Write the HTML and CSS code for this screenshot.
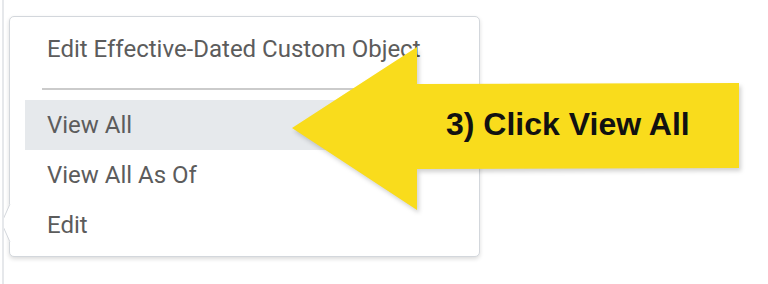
FILE: index.html
```html
<!DOCTYPE html>
<html lang="en">
<head>
    <meta charset="UTF-8">
    <meta name="viewport" content="width=device-width, initial-scale=1.0">
    <title>View All</title>
    <link rel="stylesheet" href="styles.css">
</head>
<body>
    <div class="stage">
        <div class="menu">
            <svg class="notch" width="12" height="38" viewBox="0 0 12 38">
                <rect x="9" y="0" width="3" height="38" fill="#fff"/>
                <path d="M10 0 L1.5 19 L10 38" fill="#fff" stroke="#d3d7dc" stroke-width="1"/>
            </svg>
            <ul>
                <li class="item">Edit Effective-Dated Custom Object</li>
                <li class="divider"></li>
                <li class="item active">View All</li>
                <li class="item">View All As Of</li>
                <li class="item">Edit</li>
            </ul>
        </div>

        <!-- annotation arrow -->
        <svg class="arrow" width="768" height="284" viewBox="0 0 768 284">
            <polygon points="292,128 417,47 417,84 739,83 739,168 417,169 417,210" fill="#f9dc1c"/>
        </svg>
        <span class="callout">3) Click View All</span>
    </div>
</body>
</html>
```

FILE: styles.css
```css
body {
    margin: 0;
    background-color: white;
    font-family: Roboto, "Liberation Sans", sans-serif;
}
.stage {
    position: relative;
    width: 768px;
    height: 284px;
    overflow: hidden;
    border-left: 2px solid #e6e8eb;
    margin-left: 2px;
    box-sizing: border-box;
    padding-top: 16px;
    padding-left: 5px;
}
.menu {
    position: relative;
    width: 471px;
    height: 241px;
    box-sizing: border-box;
    background-color: white;
    border: 1px solid #d3d7dc;
    border-radius: 5px;
    box-shadow: 0 2px 4px rgba(0, 0, 0, 0.14);
    padding: 7px 15px 0 15px;
}
.notch {
    position: absolute;
    left: -10px;
    top: 187px;
}
ul {
    list-style-type: none;
    margin: 0;
    padding: 0;
}
.item {
    height: 50px;
    display: flex;
    align-items: center;
    padding-left: 22px;
    font-size: 24px;
    color: #5c5c5c;
    white-space: nowrap;
}
.item.active {
    background-color: #e6e9ec;
}
.divider {
    height: 2px;
    background-color: #cbcbcb;
    margin: 14px 18px 10px 17px;
}
.arrow {
    position: absolute;
    left: -4px;
    top: 0;
    filter: drop-shadow(2px 3px 2px rgba(0, 0, 0, 0.18));
}
.callout {
    position: absolute;
    left: 442px;
    top: 106px;
    font-family: "Liberation Sans", Arial, sans-serif;
    font-weight: bold;
    font-size: 32px;
    color: #111;
}
```
